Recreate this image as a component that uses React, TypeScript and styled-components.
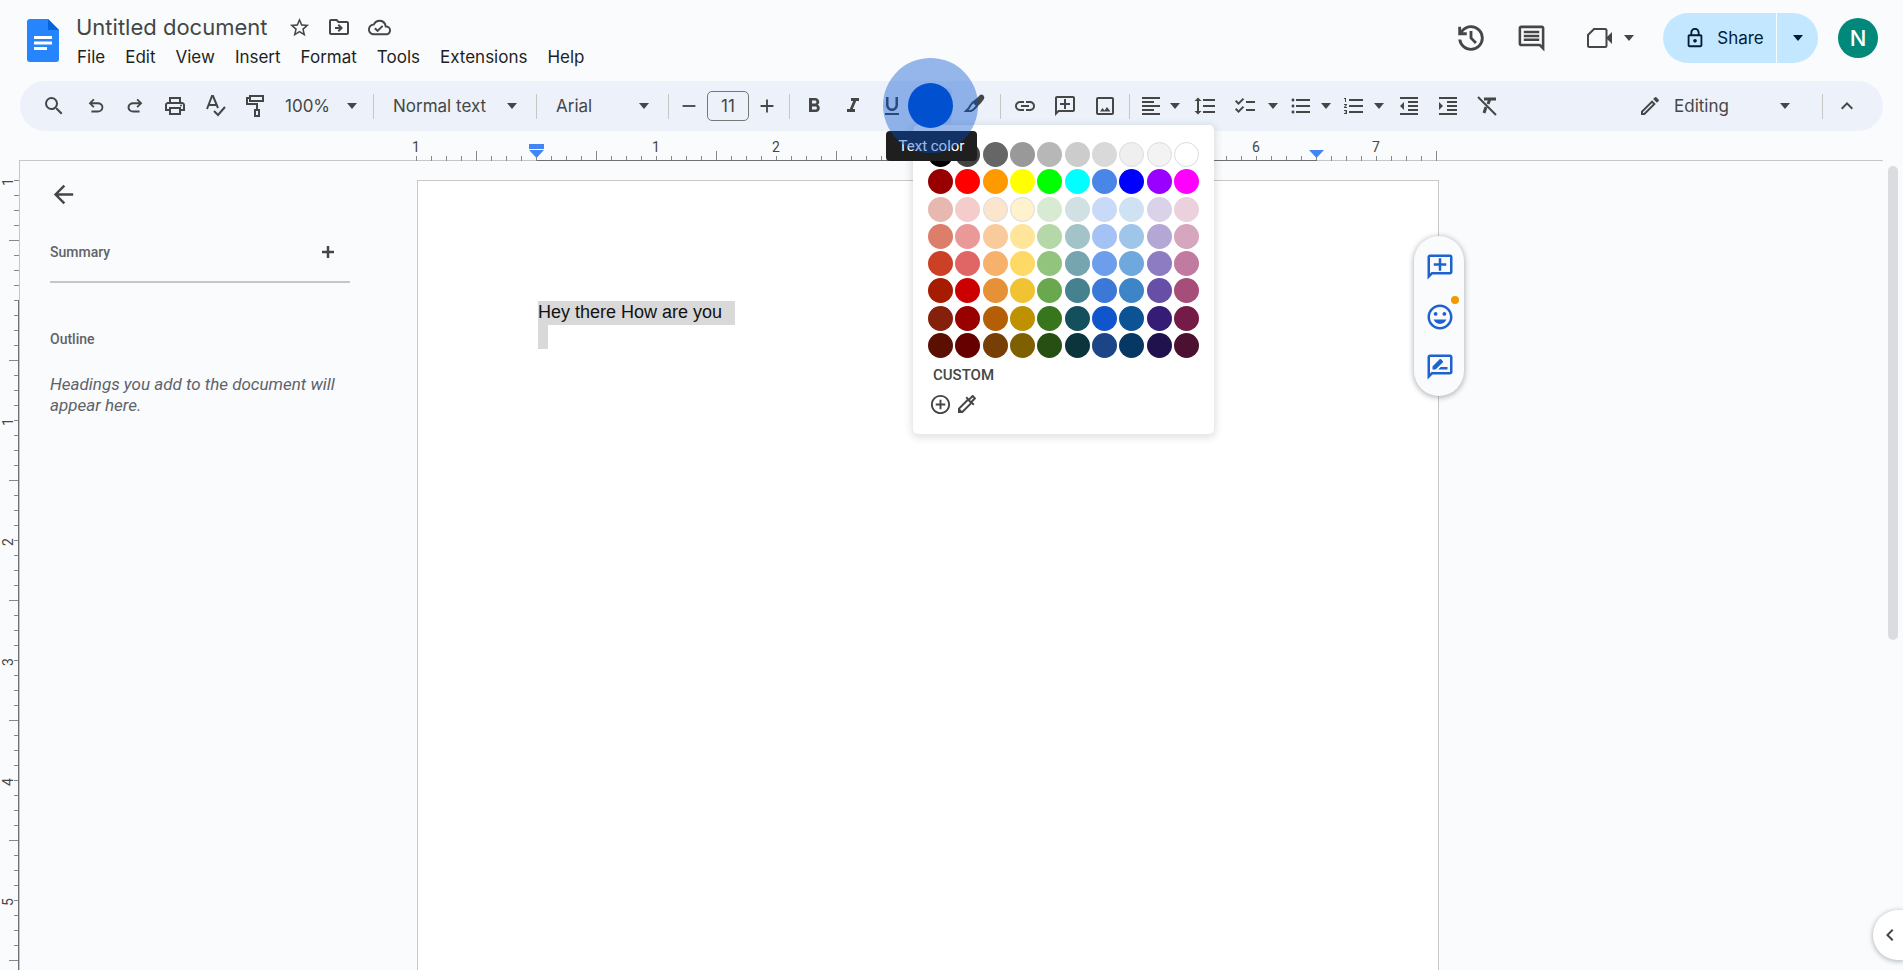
import React from "react";
import styled, { createGlobalStyle, css } from "styled-components";
import {
  MdAdd,
  MdAddCircleOutline,
  MdArrowBack,
  MdChecklist,
  MdChevronLeft,
  MdExpandLess,
  MdFormatAlignLeft,
  MdFormatBold,
  MdFormatIndentDecrease,
  MdFormatIndentIncrease,
  MdFormatItalic,
  MdFormatLineSpacing,
  MdFormatListBulleted,
  MdFormatListNumbered,
  MdFormatUnderlined,
  MdInsertEmoticon,
  MdLink,
  MdOutlineAddComment,
  MdOutlineCloudDone,
  MdOutlineColorize,
  MdOutlineComment,
  MdOutlineDriveFileMove,
  MdOutlineLock,
  MdOutlineModeEdit,
  MdOutlinePrint,
  MdOutlineRateReview,
  MdRemove,
  MdSearch,
  MdStarOutline,
} from "react-icons/md";

const ink = "#444746";
const surface = "#f9fbfd";
const uiFont = `Inter, Roboto, "Liberation Sans", sans-serif`;

const GlobalStyle = createGlobalStyle`
  * { box-sizing: border-box; }
  body { margin: 0; background: ${surface}; color: ${ink}; font-family: ${uiFont}; }
  button, input, select { font: inherit; color: inherit; }
  svg { display: block; flex: none; }
`;

const Shell = styled.div`
  display: flex;
  flex-direction: column;
  height: 100vh;
  overflow: hidden;
  position: relative;
`;

const plainButton = css`
  display: flex;
  align-items: center;
  justify-content: center;
  border: 0;
  padding: 0;
  background: transparent;
  cursor: pointer;
`;

/* Header */

const Header = styled.header`
  display: flex;
  flex: none;
  height: 81px;
  padding: 13px 25px 0 26px;
`;

const LogoLink = styled.a`
  display: block;
  padding-top: 6px;
  margin-right: 16px;
`;

const TitleBlock = styled.div`
  flex: 1;
`;

const TitleRow = styled.div`
  display: flex;
  align-items: center;
  height: 28px;
`;

const DocTitle = styled.h1`
  margin: 0 20px 0 1px;
  font: 400 22px/28px ${uiFont};
`;

const TitleAction = styled.button`
  ${plainButton}
  width: 24px;
  height: 24px;
  margin-right: 16px;
`;

const MenuBar = styled.nav`
  display: flex;
  gap: 20px;
  padding: 5px 0 0 2px;
`;

const MenuButton = styled.button`
  ${plainButton}
  color: #1f1f1f;
  font-size: 17px;
  line-height: 22px;
`;

const HeaderTools = styled.div`
  display: flex;
  align-items: center;
  height: 50px;
`;

const HeaderButton = styled.button<{ $w: number }>`
  ${plainButton}
  width: ${(p) => p.$w}px;
  height: 50px;
`;

const CallGroup = styled.div`
  display: flex;
  margin: 0 21px 0 22px;
`;

const ShareGroup = styled.div`
  display: flex;
  gap: 1px;
  margin-right: 20px;
  color: #001d35;
`;

const ShareButton = styled.button`
  ${plainButton}
  gap: 11px;
  width: 113px;
  height: 50px;
  padding-left: 9px;
  border-radius: 25px 0 0 25px;
  background: #c2e7ff;
  font-size: 17px;
`;

const ShareMenuButton = styled.button`
  ${plainButton}
  width: 41px;
  height: 50px;
  border-radius: 0 25px 25px 0;
  background: #c2e7ff;
`;

const Avatar = styled.button`
  ${plainButton}
  width: 40px;
  height: 40px;
  border-radius: 50%;
  background: #00897b;
  color: #fff;
  font-size: 22px;
  font-weight: 500;
`;

/* Toolbar */

const Toolbar = styled.div`
  display: flex;
  flex: none;
  align-items: center;
  gap: 3px;
  height: 50px;
  margin: 0 20px;
  padding: 0 18px 0 13px;
  border-radius: 25px;
  background: #edf2fa;
  font-size: 17px;
`;

const ToolButton = styled.button<{ $w?: number; $active?: boolean }>`
  ${plainButton}
  width: ${(p) => p.$w ?? 36}px;
  height: 36px;
  border-radius: 5px;
  background: ${(p) => (p.$active ? "#dfe4ec" : "transparent")};
`;

const Split = styled.div`
  display: flex;
`;

const Divider = styled.span`
  width: 1px;
  height: 25px;
  margin: 0 3px;
  background: #c7c7c7;
`;

const SelectBox = styled.label<{ $w: number; $arrow: number }>`
  position: relative;
  width: ${(p) => p.$w}px;

  svg {
    position: absolute;
    top: 15px;
    right: ${(p) => p.$arrow}px;
    pointer-events: none;
  }
`;

const Select = styled.select<{ $pad: number }>`
  display: block;
  width: 100%;
  height: 36px;
  padding: 0 0 0 ${(p) => p.$pad}px;
  border: 0;
  background: transparent;
  appearance: none;
`;

const SizeGroup = styled.div`
  display: flex;
  align-items: center;
  gap: 4px;
  margin-right: 2px;
`;

const SizeInput = styled.input`
  width: 42px;
  height: 30px;
  padding: 0;
  border: 1px solid #747775;
  border-radius: 5px;
  background: transparent;
  text-align: center;
`;

const Spacer = styled.div`
  flex: 1;
`;

const ModeBox = styled.label`
  display: flex;
  align-items: center;
  position: relative;
  width: 178px;

  > svg:last-child {
    position: absolute;
    right: 26px;
    pointer-events: none;
  }
`;

const Flip = styled.span`
  display: block;
  transform: scaleX(-1);
`;

/* Text colour control with its palette, tooltip and click halo */

const ColorAnchor = styled.div`
  position: relative;
`;

const Palette = styled.div`
  position: absolute;
  z-index: 3;
  top: 37px;
  left: 0;
  width: 301px;
  height: 309px;
  padding: 17px 15px;
  border-radius: 5px;
  background: #fff;
  box-shadow: 0 2px 7px 2px rgba(60, 64, 67, 0.15);
`;

const Swatches = styled.div`
  display: grid;
  grid-template-columns: repeat(10, 25px);
  justify-content: space-between;
  align-content: space-between;
  height: 216px;
`;

const Swatch = styled.button<{ $c: string; $ring: boolean }>`
  width: 25px;
  height: 25px;
  padding: 0;
  border: ${(p) => (p.$ring ? "1px solid #dadce0" : "0")};
  border-radius: 50%;
  background: ${(p) => p.$c};
`;

const CustomLabel = styled.div`
  padding: 8px 0 0 5px;
  font: 500 15px/18px Roboto, sans-serif;
`;

const CustomRow = styled.div`
  display: flex;
  gap: 3px;
  padding-top: 8px;

  button {
    ${plainButton}
    width: 24px;
    height: 24px;
  }
`;

const Tooltip = styled.div`
  position: absolute;
  z-index: 4;
  top: 43px;
  left: -27px;
  width: 91px;
  border-radius: 4px;
  background: #1f1f1f;
  color: #fff;
  font: 400 15px/30px Roboto, sans-serif;
  text-align: center;
`;

const ClickHalo = styled.div`
  position: absolute;
  z-index: 5;
  top: -30px;
  left: -30px;
  display: grid;
  place-items: center;
  width: 95px;
  height: 95px;
  border-radius: 50%;
  background: rgba(0, 80, 208, 0.4);
  pointer-events: none;
`;

const ClickDot = styled.div`
  width: 45px;
  height: 45px;
  border-radius: 50%;
  background: #0050cf;
`;

/* Rulers */

const RulerBar = styled.div`
  display: flex;
  flex: none;
  height: 30px;
  margin: 0 20px 0 19px;
  padding-left: 397px;
  border-bottom: 1px solid #c7c7c7;
`;

const RulerScale = styled.div`
  position: relative;
  display: flex;
  flex-direction: column;
  justify-content: space-between;
  width: 1021px;
  height: 30px;
`;

const RulerLabels = styled.div`
  display: flex;
  margin: 8px -60px 0;
  font: 400 14px/16px Roboto, sans-serif;

  span {
    flex: none;
    width: 120px;
    text-align: center;
  }
`;

const Ticks = styled.div`
  display: flex;
  align-items: flex-end;
  height: 10px;
  margin-top: -5px;
`;

const Tick = styled.i<{ $tall: boolean }>`
  flex: none;
  width: 15px;
  height: ${(p) => (p.$tall ? 10 : 5)}px;
  border-left: 1px solid #85878a;
`;

const ActiveSpan = styled.div`
  position: absolute;
  left: 121px;
  bottom: 0;
  width: 780px;
  height: 1px;
  background: #6e7073;
`;

const IndentMarker = styled.svg<{ $x: number }>`
  position: absolute;
  left: ${(p) => p.$x}px;
  bottom: 3px;
`;

const Workspace = styled.div`
  display: flex;
  flex: 1;
  min-height: 0;
`;

const SideRuler = styled.div`
  position: relative;
  flex: none;
  display: flex;
  width: 20px;
  padding-top: 19px;
  border-right: 1px solid #c7c7c7;
  overflow: hidden;
`;

const SideLabels = styled.div`
  width: 14px;
  margin-top: -58px;
  font: 400 14px/16px Roboto, sans-serif;

  span {
    display: grid;
    place-items: center;
    height: 120px;
    writing-mode: vertical-rl;
    transform: rotate(180deg);
  }
`;

const SideTicks = styled.div`
  display: flex;
  flex-direction: column;
  align-items: flex-end;
  width: 10px;
  margin-left: -5px;
`;

const SideTick = styled.i<{ $tall: boolean }>`
  flex: none;
  width: ${(p) => (p.$tall ? 10 : 5)}px;
  height: 15px;
  border-top: 1px solid #85878a;
`;

const SideActive = styled.div`
  position: absolute;
  top: 139px;
  right: 0;
  bottom: 0;
  width: 1px;
  background: #6e7073;
`;

/* Outline panel */

const Outline = styled.aside`
  flex: none;
  width: 397px;
  padding: 19px 67px 0 30px;
  font-family: Roboto, sans-serif;
  color: #5f6368;
`;

const BackButton = styled.button`
  ${plainButton}
  width: 26px;
  height: 28px;
  color: ${ink};
`;

const SummaryRow = styled.div`
  display: flex;
  align-items: center;
  justify-content: space-between;
  height: 60px;
  margin-top: 15px;
  padding-right: 10px;
  border-bottom: 2px solid #c4c7c5;
`;

const SectionTitle = styled.h2`
  margin: 0;
  font: 500 14px/20px Roboto, sans-serif;
`;

const AddButton = styled.button`
  ${plainButton}
  width: 24px;
  height: 24px;
  color: ${ink};
`;

const OutlineSection = styled.section`
  padding-top: 46px;
`;

const Hint = styled.p`
  margin: 25px 0 0;
  font-size: 17px;
  font-style: italic;
  line-height: 21px;
`;

/* Document */

const DocumentArea = styled.main`
  display: flex;
  flex: 1;
  padding-top: 19px;
`;

const Page = styled.article`
  position: relative;
  flex: none;
  width: 1022px;
  padding: 120px;
  border: 1px solid #c7c7c7;
  border-bottom: 0;
  background: #fff;
  color: #111;
  font: 400 18px/22px "Liberation Sans", Arial, sans-serif;

  p {
    margin: 0;
    display: flex;
  }
`;

const Selected = styled.span`
  min-width: 10px;
  height: 24px;
  background: #d9d9d9;

  &:not(:empty) {
    padding-right: 13px;
  }
`;

const CommentPill = styled.div`
  position: absolute;
  top: 55px;
  right: -26px;
  display: flex;
  flex-direction: column;
  align-items: center;
  justify-content: center;
  width: 50px;
  height: 160px;
  padding: 2px 0 0 2px;
  border-radius: 25px;
  background: ${surface};
  color: #1f62cf;
  box-shadow: 0 1px 5px 1px rgba(60, 64, 67, 0.35);
`;

const PillButton = styled.button`
  ${plainButton}
  position: relative;
  width: 48px;
  height: 50px;
`;

const Dot = styled.span`
  position: absolute;
  top: 4px;
  right: 5px;
  width: 8px;
  height: 8px;
  border-radius: 50%;
  background: #f29900;
`;

const ScrollThumb = styled.div`
  position: absolute;
  top: 166px;
  right: 5px;
  width: 10px;
  height: 474px;
  border-radius: 5px;
  background: #dadce0;
`;

const PanelToggle = styled.button`
  ${plainButton}
  position: absolute;
  right: 0;
  bottom: 10px;
  width: 30px;
  height: 50px;
  padding-left: 4px;
  border-radius: 25px 0 0 25px;
  background: #fff;
  box-shadow: 0 1px 4px 1px rgba(60, 64, 67, 0.3);
`;

/* Drawn icons */

const Caret = () => (
  <svg width="10" height="6" viewBox="0 0 10 6" aria-hidden="true">
    <path d="M0 0h10L5 6z" fill="currentColor" />
  </svg>
);

const DocsLogo = () => (
  <svg width="33" height="44" viewBox="0 0 33 44" aria-hidden="true">
    <path d="M4 0h18l11 11v29a3 3 0 0 1-3 3H4a3 3 0 0 1-3-3V3a3 3 0 0 1 3-3z" fill="#2684fc" />
    <path d="M22 0l11 11H22z" fill="#0066da" />
    <path d="M8 17h18v3H8zM8 22.500h18v3H8zM8 28h13v3H8z" fill="#fff" />
  </svg>
);

const Symbol = ({ d, size = 22 }: { d: string; size?: number }) => (
  <svg width={size} height={size} viewBox="0 -960 960 960" fill="currentColor" aria-hidden="true">
    <path d={d} />
  </svg>
);

const undoPath =
  "M280-200v-80h284q63 0 109.500-40T720-420q0-60-46.500-100T564-560H312l104 104-56 56-200-200 200-200 56 56-104 104h252q97 0 169.500 63T800-420q0 94-72.500 157T564-200H280Z";
const redoPath =
  "M396-200q-97 0-169.500-63T154-420q0-94 72.500-157T396-640h252L544-744l56-56 200 200-200 200-56-56 104-104H396q-63 0-109.500 40T240-420q0 60 46.500 100T396-280h284v80H396Z";
const historyPath =
  "M480-120q-138 0-240.500-91.500T122-440h82q14 104 92.500 172T480-200q117 0 198.500-81.500T760-480q0-117-81.500-198.500T480-760q-69 0-129 32t-101 88h110v80H120v-240h80v94q51-64 124.500-99T480-840q75 0 140.500 28.500t114 77q48.500 48.500 77 114T840-480q0 75-28.500 140.500t-77 114q-48.500 48.500-114 77T480-120Zm112-192L440-464v-216h80v184l128 128-56 56Z";

const SpellIcon = () => (
  <svg width="24" height="24" viewBox="0 0 24 24" fill="none" stroke="currentColor" strokeWidth="2" aria-hidden="true">
    <path d="M4 15L9 2h1l5 12M6 11h7" />
    <path d="M11 17l4 4 7-8" />
  </svg>
);

const RollerIcon = () => (
  <svg width="24" height="26" viewBox="0 0 24 26" fill="none" stroke="currentColor" strokeWidth="2" aria-hidden="true">
    <path d="M8 3h13v5H8zM8 5H5v6h10v5" />
    <path d="M13 17h4v6h-4z" />
  </svg>
);

const ImageIcon = () => (
  <svg width="24" height="24" viewBox="0 0 24 24" aria-hidden="true">
    <rect x="4" y="4" width="16" height="16" rx="1" fill="none" stroke="currentColor" strokeWidth="2" />
    <path d="M7 17.500l2.500-3.500 2 2.500 2.500-3.500 3.500 4.500z" fill="currentColor" />
  </svg>
);

const MarkerIcon = () => (
  <svg width="24" height="24" viewBox="0 0 24 24" aria-hidden="true">
    <path d="M14 4l3-3q2-1 3.500.500t.500 3.500l-3 4-4 4-5-5z" fill="currentColor" />
    <path d="M10 8l-3 4-1 2-3 3h5l2-1 4-4" fill="none" stroke="currentColor" strokeWidth="2" />
  </svg>
);

const ClearIcon = () => (
  <svg width="24" height="24" viewBox="0 0 24 24" fill="none" stroke="currentColor" strokeWidth="2" aria-hidden="true">
    <path d="M3 3l18 18" />
    <path d="M9 5h12M15 5l-2 5M11 13l-2 6" strokeWidth="3" />
  </svg>
);

const CameraIcon = () => (
  <svg width="28" height="24" viewBox="0 0 28 24" aria-hidden="true">
    <path
      d="M8 3h11a1.500 1.500 0 0 1 1.500 1.500v15A1.500 1.500 0 0 1 19 21H3.500A1.500 1.500 0 0 1 2 19.500V9z"
      fill="none"
      stroke="currentColor"
      strokeWidth="2"
    />
    <path d="M20 12l6-6v12z" fill="currentColor" />
  </svg>
);

const BoldPlus = () => (
  <svg width="14" height="14" viewBox="0 0 14 14" aria-hidden="true">
    <path d="M7 1v12M1 7h12" stroke="currentColor" strokeWidth="2.500" />
  </svg>
);

/* Data */

const menus = ["File", "Edit", "View", "Insert", "Format", "Tools", "Extensions", "Help"];

const colors = [
  "#000000 #434343 #666666 #999999 #b7b7b7 #cccccc #d9d9d9 #efefef #f3f3f3 #ffffff",
  "#980000 #ff0000 #ff9900 #ffff00 #00ff00 #00ffff #4a86e8 #0000ff #9900ff #ff00ff",
  "#e6b8af #f4cccc #fce5cd #fff2cc #d9ead3 #d0e0e3 #c9daf8 #cfe2f3 #d9d2e9 #ead1dc",
  "#dd7e6b #ea9999 #f9cb9c #ffe599 #b6d7a8 #a2c4c9 #a4c2f4 #9fc5e8 #b4a7d6 #d5a6bd",
  "#cc4125 #e06666 #f6b26b #ffd966 #93c47d #76a5af #6d9eeb #6fa8dc #8e7cc3 #c27ba0",
  "#a61c00 #cc0000 #e69138 #f1c232 #6aa84f #45818e #3c78d8 #3d85c6 #674ea7 #a64d79",
  "#85200c #990000 #b45f06 #bf9000 #38761d #134f5c #1155cc #0b5394 #351c75 #741b47",
  "#5b0f00 #660000 #783f04 #7f6000 #274e13 #0c343d #1c4587 #073763 #20124d #4c1130",
].flatMap((row) => row.split(" "));

const ringed = ["#efefef", "#f3f3f3", "#ffffff", "#fce5cd", "#fff2cc"];

/* Inches under the open palette carry no label. */
const topLabels = ["1", "", "1", "2", "", "", "", "6", "7"];
const sideLabels = ["1", "", "1", "2", "3", "4", "5"];

export default function App() {
  return (
    <>
      <GlobalStyle />
      <Shell>
        <Header>
          <LogoLink href="#home" aria-label="Docs home">
            <DocsLogo />
          </LogoLink>
          <TitleBlock>
            <TitleRow>
              <DocTitle>Untitled document</DocTitle>
              <TitleAction aria-label="Star"><MdStarOutline size={23} /></TitleAction>
              <TitleAction aria-label="Move"><MdOutlineDriveFileMove size={24} /></TitleAction>
              <TitleAction aria-label="Document status"><MdOutlineCloudDone size={23} /></TitleAction>
            </TitleRow>
            <MenuBar>
              {menus.map((m) => (
                <MenuButton key={m}>{m}</MenuButton>
              ))}
            </MenuBar>
          </TitleBlock>
          <HeaderTools>
            <HeaderButton $w={61} aria-label="Version history"><Symbol d={historyPath} size={34} /></HeaderButton>
            <HeaderButton $w={61} aria-label="Comments"><MdOutlineComment size={31} /></HeaderButton>
            <CallGroup>
              <HeaderButton $w={32} aria-label="Join a call"><CameraIcon /></HeaderButton>
              <HeaderButton $w={26} aria-label="Call options"><Caret /></HeaderButton>
            </CallGroup>
            <ShareGroup>
              <ShareButton><MdOutlineLock size={22} />Share</ShareButton>
              <ShareMenuButton aria-label="Share options"><Caret /></ShareMenuButton>
            </ShareGroup>
            <Avatar aria-label="Account">N</Avatar>
          </HeaderTools>
        </Header>

        <Toolbar role="toolbar">
          <ToolButton $w={42} aria-label="Search menus"><MdSearch size={24} /></ToolButton>
          <ToolButton aria-label="Undo"><Symbol d={undoPath} /></ToolButton>
          <ToolButton aria-label="Redo"><Symbol d={redoPath} /></ToolButton>
          <ToolButton $w={38} aria-label="Print"><MdOutlinePrint size={24} /></ToolButton>
          <ToolButton aria-label="Spelling check"><SpellIcon /></ToolButton>
          <ToolButton aria-label="Paint format"><RollerIcon /></ToolButton>
          <SelectBox $w={92} $arrow={10}>
            <Select $pad={10} aria-label="Zoom"><option>100%</option></Select>
            <Caret />
          </SelectBox>
          <Divider />
          <SelectBox $w={150} $arrow={13}>
            <Select $pad={13} aria-label="Styles"><option>Normal text</option></Select>
            <Caret />
          </SelectBox>
          <Divider />
          <SelectBox $w={119} $arrow={13}>
            <Select $pad={13} aria-label="Font"><option>Arial</option></Select>
            <Caret />
          </SelectBox>
          <Divider />
          <SizeGroup>
            <ToolButton $w={28} aria-label="Decrease font size"><MdRemove size={22} /></ToolButton>
            <SizeInput aria-label="Font size" defaultValue="11" />
            <ToolButton $w={28} aria-label="Increase font size"><MdAdd size={22} /></ToolButton>
          </SizeGroup>
          <Divider />
          <ToolButton aria-label="Bold"><MdFormatBold size={24} /></ToolButton>
          <ToolButton aria-label="Italic"><MdFormatItalic size={24} /></ToolButton>
          <ToolButton aria-label="Underline"><MdFormatUnderlined size={24} /></ToolButton>
          <ColorAnchor>
            <ToolButton $w={39} $active aria-label="Text color" />
            <Palette>
              <Swatches>
                {colors.map((c) => (
                  <Swatch key={c} $c={c} $ring={ringed.includes(c)} aria-label={c} />
                ))}
              </Swatches>
              <CustomLabel>CUSTOM</CustomLabel>
              <CustomRow>
                <button aria-label="Add a custom color"><MdAddCircleOutline size={23} /></button>
                <button aria-label="Pick a custom color"><MdOutlineColorize size={24} /></button>
              </CustomRow>
            </Palette>
            <Tooltip role="tooltip">Text color</Tooltip>
            <ClickHalo><ClickDot /></ClickHalo>
          </ColorAnchor>
          <ToolButton $w={39} aria-label="Highlight color"><MarkerIcon /></ToolButton>
          <Divider />
          <ToolButton aria-label="Insert link"><MdLink size={24} /></ToolButton>
          <ToolButton $w={38} aria-label="Add comment"><Flip><MdOutlineAddComment size={24} /></Flip></ToolButton>
          <ToolButton aria-label="Insert image"><ImageIcon /></ToolButton>
          <Divider />
          <Split>
            <ToolButton $w={30} aria-label="Align"><MdFormatAlignLeft size={24} /></ToolButton>
            <ToolButton $w={18} aria-label="Align options"><Caret /></ToolButton>
          </Split>
          <ToolButton aria-label="Line spacing"><MdFormatLineSpacing size={24} /></ToolButton>
          <Split>
            <ToolButton $w={38} aria-label="Checklist"><MdChecklist size={24} /></ToolButton>
            <ToolButton $w={18} aria-label="Checklist options"><Caret /></ToolButton>
          </Split>
          <Split>
            <ToolButton $w={32} aria-label="Bulleted list"><MdFormatListBulleted size={24} /></ToolButton>
            <ToolButton $w={18} aria-label="Bulleted list options"><Caret /></ToolButton>
          </Split>
          <Split>
            <ToolButton $w={32} aria-label="Numbered list"><MdFormatListNumbered size={24} /></ToolButton>
            <ToolButton $w={18} aria-label="Numbered list options"><Caret /></ToolButton>
          </Split>
          <ToolButton aria-label="Decrease indent"><MdFormatIndentDecrease size={24} /></ToolButton>
          <ToolButton aria-label="Increase indent"><MdFormatIndentIncrease size={24} /></ToolButton>
          <ToolButton aria-label="Clear formatting"><ClearIcon /></ToolButton>
          <Spacer />
          <ModeBox>
            <MdOutlineModeEdit size={24} />
            <Select $pad={12} aria-label="Mode"><option>Editing</option></Select>
            <Caret />
          </ModeBox>
          <Divider />
          <ToolButton aria-label="Hide the menus"><MdExpandLess size={24} /></ToolButton>
        </Toolbar>

        <RulerBar>
          <RulerScale>
            <RulerLabels>
              {topLabels.map((l, i) => <span key={i}>{l}</span>)}
            </RulerLabels>
            <Ticks>
              {Array.from({ length: 69 }, (_, i) => <Tick key={i} $tall={i % 8 === 4} />)}
            </Ticks>
            <ActiveSpan />
            <IndentMarker $x={113} width="15" height="14" viewBox="0 0 15 14">
              <path d="M0 0h15v5H0zM0 6h15L7.500 14z" fill="#4285f4" />
            </IndentMarker>
            <IndentMarker $x={893} width="15" height="8" viewBox="0 0 15 8">
              <path d="M0 0h15L7.500 8z" fill="#4285f4" />
            </IndentMarker>
          </RulerScale>
        </RulerBar>

        <Workspace>
          <SideRuler>
            <SideLabels>
              {sideLabels.map((l, i) => <span key={i}>{l}</span>)}
            </SideLabels>
            <SideTicks>
              {Array.from({ length: 53 }, (_, i) => <SideTick key={i} $tall={i % 8 === 4} />)}
            </SideTicks>
            <SideActive />
          </SideRuler>
          <Outline>
            <BackButton aria-label="Close document outline"><MdArrowBack size={29} /></BackButton>
            <SummaryRow>
              <SectionTitle>Summary</SectionTitle>
              <AddButton aria-label="Add summary"><BoldPlus /></AddButton>
            </SummaryRow>
            <OutlineSection>
              <SectionTitle>Outline</SectionTitle>
              <Hint>Headings you add to the document will appear here.</Hint>
            </OutlineSection>
          </Outline>
          <DocumentArea>
            <Page>
              <p><Selected>Hey there How are you</Selected></p>
              <p><Selected /></p>
              <CommentPill>
                <PillButton aria-label="Add comment"><Flip><MdOutlineAddComment size={30} /></Flip></PillButton>
                <PillButton aria-label="Add emoji reaction"><MdInsertEmoticon size={30} /><Dot /></PillButton>
                <PillButton aria-label="Suggest edits"><MdOutlineRateReview size={30} /></PillButton>
              </CommentPill>
            </Page>
          </DocumentArea>
        </Workspace>
        <ScrollThumb />
        <PanelToggle aria-label="Show side panel"><MdChevronLeft size={24} /></PanelToggle>
      </Shell>
    </>
  );
}
